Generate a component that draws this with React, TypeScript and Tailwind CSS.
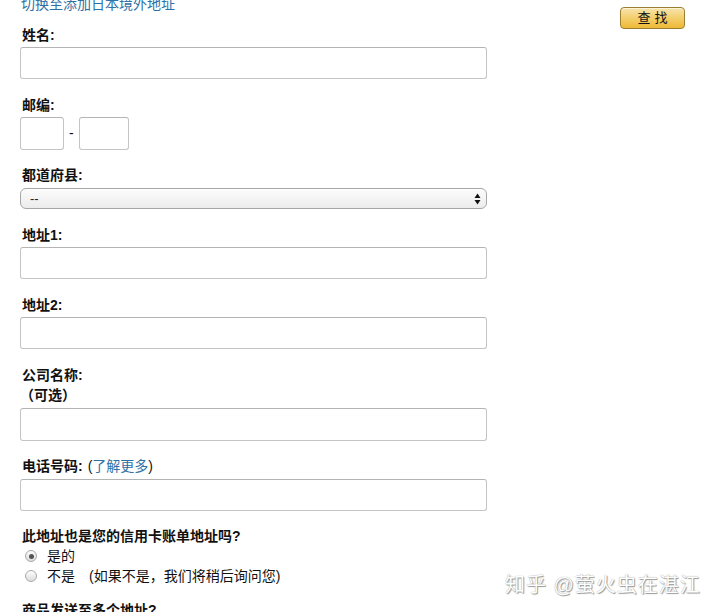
import React from 'react';

const FONT = { fontFamily: '"Liberation Sans", "Noto Sans CJK SC", sans-serif' };

function Label({ children, className = '' }: { children: React.ReactNode; className?: string }) {
    return <div className={`h-5 leading-5 text-[14px] font-bold text-[#111] ${className}`}>{children}</div>;
}

function TextBox({ className = '' }: { className?: string }) {
    return <div className={`h-8 w-full rounded-[3px] border border-[#c4c4c4] border-t-[#b4b4b4] bg-white ${className}`} />;
}

function Radio({ checked }: { checked?: boolean }) {
    return (
        <span className="flex h-[12px] w-[12px] items-center justify-center rounded-full border border-[#a9a9a9] bg-gradient-to-b from-[#fdfdfd] to-[#dcdcdc]">
            {checked && <span className="h-[5px] w-[5px] rounded-full bg-[#555]" />}
        </span>
    );
}

export default function App() {
    return (
        <div className="relative h-[612px] w-[720px] overflow-hidden bg-white" style={FONT}>
            <div className="flex pl-[20px] pr-[35px]">
                <div className="-mt-[6px] w-[467px]">
                    <a className="block h-5 pl-[1px] leading-5 text-[14px] text-[#2f72a6]">切换至添加日本境外地址</a>

                    <Label className="mt-[11px] pl-[2px]">姓名:</Label>
                    <TextBox className="mt-[2px]" />

                    <Label className="mt-[16px] pl-[2px]">邮编:</Label>
                    <div className="mt-[2px] flex items-center">
                        <TextBox className="!w-[44px] h-[33px]" />
                        <span className="mx-[5px] text-[14px] text-[#111]">-</span>
                        <TextBox className="!w-[50px] h-[33px]" />
                    </div>

                    <Label className="mt-[15px] pl-[2px]">都道府县:</Label>
                    <div className="mt-[3px] flex h-[21px] w-full items-center justify-between rounded-[6px] border border-[#a6a6a6] bg-gradient-to-b from-[#fcfcfc] to-[#ececec] pl-[9px] pr-[5px] shadow-[inset_0_1px_0_#fff]">
                        <span className="text-[13px] leading-none text-[#222]">--</span>
                        <svg width="7" height="12" viewBox="0 0 7 12">
                            <path d="M3.5 0.5 L6.5 5 L0.5 5 Z" fill="#111" />
                            <path d="M3.5 11.5 L6.5 7 L0.5 7 Z" fill="#111" />
                        </svg>
                    </div>

                    <Label className="mt-[16px] pl-[2px]">地址1:</Label>
                    <TextBox className="mt-[2px]" />

                    <Label className="mt-[16px] pl-[2px]">地址2:</Label>
                    <TextBox className="mt-[2px]" />

                    <Label className="mt-[16px] pl-[2px]">公司名称:</Label>
                    <Label>（可选）</Label>
                    <TextBox className="mt-[3px] h-[33px]" />

                    <Label className="mt-[15px] pl-[2px]">
                        电话号码:<span className="ml-[5px] font-normal">(<a className="text-[#2f72a6]">了解更多</a>)</span>
                    </Label>
                    <TextBox className="mt-[3px]" />

                    <Label className="mt-[15px] pl-[2px]">此地址也是您的信用卡账单地址吗?</Label>
                    <div className="flex h-5 items-center pl-[5px] text-[14px] text-[#111]">
                        <Radio checked />
                        <span className="ml-[10px]">是的</span>
                    </div>
                    <div className="flex h-5 items-center pl-[5px] text-[14px] text-[#111]">
                        <Radio />
                        <span className="ml-[10px]">不是</span>
                        <span className="ml-[14px]">(如果不是，我们将稍后询问您)</span>
                    </div>

                    <Label className="mt-[14px] pl-[2px]">商品发送至多个地址?</Label>
                </div>

                <div className="ml-auto pt-[7px]">
                    <button className="flex h-[22px] w-[65px] items-center justify-center rounded-[4px] border border-[#9c7e31] bg-gradient-to-b from-[#f8e3ad] via-[#f3cf6b] to-[#eeb933] text-[13px] tracking-[4px] text-[#111] shadow-[inset_0_1px_0_#fcf2d5]">
                        <span className="pl-[4px]">查找</span>
                    </button>
                </div>
            </div>

            <div className="absolute left-[505px] top-[570px] text-[20px] tracking-[1px] text-white [text-shadow:0_0_1px_#8a8a8a,1px_1px_1px_#9a9a9a]">
                知乎 @萤火虫在湛江
            </div>
        </div>
    );
}
